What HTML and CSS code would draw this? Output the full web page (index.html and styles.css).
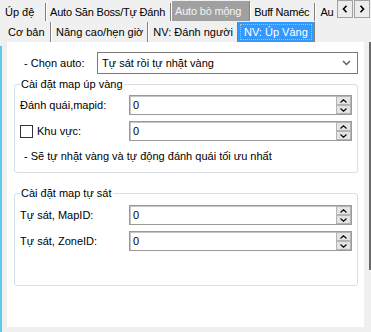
FILE: index.html
```html
<!DOCTYPE html>
<html lang="vi">

<head>
    <meta charset="UTF-8">
    <meta name="viewport" content="width=device-width, initial-scale=1.0">
    <title>Auto bò mộng</title>
    <link rel="stylesheet" href="styles.css">
</head>

<body>
    <div class="window">
        <div class="tab-bar">
            <div class="tab-strip">
                <div class="tab first">Úp đệ</div>
                <div class="tab">Auto Săn Boss/Tự Đánh</div>
                <div class="tab active">Auto bò mộng</div>
                <div class="tab">Buff Naméc</div>
                <div class="tab last">Au</div>
            </div>
            <div class="scroll-btns">
                <div class="scroll-btn"><svg width="6" height="8" viewBox="0 0 6 8"><path d="M4.5 0.8 L1.5 4 L4.5 7.2" fill="none" stroke="#000" stroke-width="1.6"/></svg></div>
                <div class="scroll-btn"><svg width="6" height="8" viewBox="0 0 6 8"><path d="M1.5 0.8 L4.5 4 L1.5 7.2" fill="none" stroke="#000" stroke-width="1.6"/></svg></div>
            </div>
        </div>

        <div class="sub-tabs">
            <div class="sub-tab first">Cơ bản</div>
            <div class="sub-tab">Nâng cao/hẹn giờ</div>
            <div class="sub-tab">NV: Đánh người</div>
            <div class="sub-tab active"><span>NV: Úp Vàng</span></div>
        </div>

        <div class="body-row">
            <div class="stripe"></div>
            <div class="panel">
                <div class="choose-row">
                    <span class="choose-label">- Chọn auto:</span>
                    <div class="select">
                        <span>Tự sát rồi tự nhặt vàng</span>
                        <svg width="9" height="6" viewBox="0 0 9 6"><path d="M1 1 L4.5 4.5 L8 1" fill="none" stroke="#606060" stroke-width="1.5"/></svg>
                    </div>
                </div>

                <fieldset class="group">
                    <legend>Cài đặt map úp vàng</legend>
                    <div class="field-row first">
                        <label class="field-label">Đánh quái,mapid:</label>
                        <div class="spin">
                            <span class="spin-value">0</span>
                            <div class="spin-btns">
                                <div class="spin-btn"><svg width="7" height="4" viewBox="0 0 7 4"><path d="M0.5 3.5 L3.5 0.8 L6.5 3.5" fill="none" stroke="#000" stroke-width="1.1"/></svg></div>
                                <div class="spin-btn"><svg width="7" height="4" viewBox="0 0 7 4"><path d="M0.5 0.5 L3.5 3.2 L6.5 0.5" fill="none" stroke="#000" stroke-width="1.1"/></svg></div>
                            </div>
                        </div>
                    </div>
                    <div class="field-row">
                        <label class="field-label check-label"><span class="checkbox"></span>Khu vực:</label>
                        <div class="spin">
                            <span class="spin-value">0</span>
                            <div class="spin-btns">
                                <div class="spin-btn"><svg width="7" height="4" viewBox="0 0 7 4"><path d="M0.5 3.5 L3.5 0.8 L6.5 3.5" fill="none" stroke="#000" stroke-width="1.1"/></svg></div>
                                <div class="spin-btn"><svg width="7" height="4" viewBox="0 0 7 4"><path d="M0.5 0.5 L3.5 3.2 L6.5 0.5" fill="none" stroke="#000" stroke-width="1.1"/></svg></div>
                            </div>
                        </div>
                    </div>
                    <p class="note">- Sẽ tự nhặt vàng và tự động đánh quái tối ưu nhất</p>
                </fieldset>

                <fieldset class="group second">
                    <legend>Cài đặt map tự sát</legend>
                    <div class="field-row first">
                        <label class="field-label">Tự sát, MapID:</label>
                        <div class="spin">
                            <span class="spin-value">0</span>
                            <div class="spin-btns">
                                <div class="spin-btn"><svg width="7" height="4" viewBox="0 0 7 4"><path d="M0.5 3.5 L3.5 0.8 L6.5 3.5" fill="none" stroke="#000" stroke-width="1.1"/></svg></div>
                                <div class="spin-btn"><svg width="7" height="4" viewBox="0 0 7 4"><path d="M0.5 0.5 L3.5 3.2 L6.5 0.5" fill="none" stroke="#000" stroke-width="1.1"/></svg></div>
                            </div>
                        </div>
                    </div>
                    <div class="field-row">
                        <label class="field-label">Tự sát, ZoneID:</label>
                        <div class="spin">
                            <span class="spin-value">0</span>
                            <div class="spin-btns">
                                <div class="spin-btn"><svg width="7" height="4" viewBox="0 0 7 4"><path d="M0.5 3.5 L3.5 0.8 L6.5 3.5" fill="none" stroke="#000" stroke-width="1.1"/></svg></div>
                                <div class="spin-btn"><svg width="7" height="4" viewBox="0 0 7 4"><path d="M0.5 0.5 L3.5 3.2 L6.5 0.5" fill="none" stroke="#000" stroke-width="1.1"/></svg></div>
                            </div>
                        </div>
                    </div>
                    <div class="group-spacer"></div>
                </fieldset>
            </div>
            <div class="edge"></div>
        </div>
    </div>
</body>

</html>
```

FILE: styles.css
```css
body {
    margin: 0;
    background-color: #f0f0f0;
    font-family: "Liberation Sans", Arial, sans-serif;
    font-size: 11px;
    color: #000;
}

.window {
    width: 371px;
    height: 332px;
    overflow: hidden;
}

/* top tab row */
.tab-bar {
    display: flex;
    height: 21px;
    padding-left: 2px;
}

.tab-strip {
    display: flex;
    flex: 1;
    overflow: hidden;
    min-width: 0;
}

.tab {
    flex-shrink: 0;
    display: flex;
    align-items: center;
    height: 18px;
    margin-top: 3px;
    padding: 0 5px 0 3px;
    border-left: 1px solid #fff;
    border-right: 1px solid #808080;
    white-space: nowrap;
    letter-spacing: -0.2px;
}

.tab.first {
    border-left: none;
    width: 33px;
    padding-right: 7px;
    letter-spacing: 0;
}

.tab.last {
    border-right: none;
    padding: 0 1px 0 4px;
}

.tab.active {
    background-color: #a0a0a0;
    color: #f4f4f4;
    margin-top: 1px;
    height: 20px;
    padding: 0 8px 0 3px;
}

.scroll-btns {
    display: flex;
    gap: 1px;
    padding-right: 1px;
}

.scroll-btn {
    width: 16px;
    height: 18px;
    box-sizing: border-box;
    border: 1px solid #a0a0a0;
    background-color: #ececec;
    display: flex;
    align-items: center;
    justify-content: center;
}

/* second tab row */
.sub-tabs {
    display: flex;
    height: 20px;
    padding-left: 2px;
    margin-top: 1px;
}

.sub-tab {
    display: flex;
    align-items: center;
    padding: 0 4px 0 4px;
    border-left: 1px solid #fff;
    border-right: 1px solid #808080;
    white-space: nowrap;
}

.sub-tab.first {
    border-left: none;
    width: 40px;
    padding-left: 6px;
    padding-right: 2px;
}

.sub-tab.active {
    background-color: #3399ff;
    color: #fff;
    margin-left: 0;
    padding: 2px;
    border-left: none;
}

.sub-tab.active span {
    display: flex;
    align-items: center;
    height: 100%;
    padding: 0 3px;
    box-sizing: border-box;
    border: 1px dotted #ffb04a;
}

/* content area */
.body-row {
    display: flex;
    height: 290px;
}

.stripe {
    width: 2px;
    margin-top: 4px;
    background-color: #5ccaf0;
}

.panel {
    width: 357px;
    height: 285px;
    margin-left: 5px;
    background-color: #fff;
    box-sizing: border-box;
    padding: 10px 6px 0 7px;
}

.edge {
    width: 2px;
    height: 228px;
    margin-left: 5px;
    background-color: #6a6a6a;
}

.choose-row {
    display: flex;
    align-items: center;
    height: 22px;
}

.choose-label {
    width: 83px;
    padding-left: 10px;
    box-sizing: border-box;
}

.select {
    width: 261px;
    height: 22px;
    box-sizing: border-box;
    border: 1px solid #7a7a7a;
    display: flex;
    align-items: center;
    justify-content: space-between;
    padding: 0 6px 0 4px;
}

.group {
    margin: 4px 0 0 0;
    padding: 0 5px 9px 5px;
    border: 1px solid #d5dfe5;
    border-radius: 3px;
}

.group.second {
    margin-top: 14px;
    padding-bottom: 0;
}

.group-spacer {
    height: 34px;
}

.group legend {
    padding: 0 1px;
    line-height: 13px;
}

.field-row {
    display: flex;
    align-items: center;
    height: 20px;
    margin-top: 6px;
}

.field-row.first {
    margin-top: 4px;
}

.group.second .field-row.first {
    margin-top: 5px;
}

.field-label {
    width: 109px;
    display: flex;
    align-items: center;
}

.check-label {
    gap: 4px;
}

.checkbox {
    width: 11px;
    height: 11px;
    border: 1px solid #333;
    background-color: #fff;
}

.spin {
    width: 223px;
    height: 20px;
    box-sizing: border-box;
    border: 1px solid #9a9a9a;
    box-shadow: inset 1px 1px 0 #c4c4c4;
    display: flex;
    align-items: center;
    justify-content: space-between;
    padding: 0 0 0 3px;
}

.spin-btns {
    display: flex;
    flex-direction: column;
    height: 18px;
}

.spin-btn {
    width: 15px;
    height: 9px;
    box-sizing: border-box;
    border: 1px solid #b4b4b4;
    background-color: #e4e4e4;
    display: flex;
    align-items: center;
    justify-content: center;
}

.note {
    margin: 9px 0 0 4px;
    line-height: 13px;
}
```
